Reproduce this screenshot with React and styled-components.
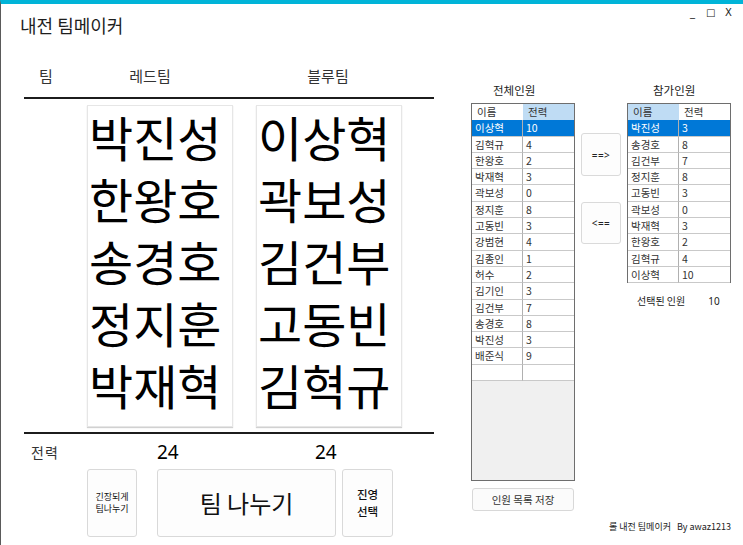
import React from "react";
import styled, { createGlobalStyle } from "styled-components";

const Global = createGlobalStyle`
  html, body { margin: 0; padding: 0; background: #ffffff; }
  body { font-family: "Noto Sans CJK KR", "Noto Sans", sans-serif; }
  * { box-sizing: border-box; }
`;

const Window = styled.div`
  width: 743px;
  height: 545px;
  background: #ffffff;
  border-top: 4px solid #00b4d8;
  border-left: 1px solid #5a5a5a;
  display: flex;
  flex-direction: column;
  overflow: hidden;
  color: #222;
`;

const TitleRow = styled.div`
  height: 46px;
  display: flex;
  justify-content: space-between;
  align-items: flex-start;
`;

const Title = styled.div`
  font-size: 18px;
  line-height: 22px;
  margin: 10px 0 0 19px;
  color: #1e1e1e;
`;

const Controls = styled.div`
  display: flex;
  gap: 9px;
  margin: 2px 10px 0 0;
  font-family: "DejaVu Sans", sans-serif;
  font-size: 10px;
  line-height: 14px;
  color: #222;
`;

const Ctl = styled.span`
  width: 9px;
  text-align: center;
`;

const Content = styled.div`
  display: flex;
  flex: 1;
`;

const LeftPanel = styled.div`
  margin-left: 23px;
  width: 410px;
  display: flex;
  flex-direction: column;
`;

const Header = styled.div`
  height: 49px;
  display: grid;
  grid-template-columns: 44px 164px 192px;
  border-bottom: 2px solid #1c1c1c;
  padding-top: 17px;
`;

const HeadLabel = styled.div`
  text-align: center;
  font-size: 15px;
  line-height: 18px;
  color: #333;
`;

const Cards = styled.div`
  display: grid;
  grid-template-columns: 146px 146px;
  column-gap: 23px;
  margin: 6px 0 0 63px;
`;

const Card = styled.div`
  height: 322px;
  background: #fff;
  border: 1px solid #e6e6e6;
  box-shadow: 0 1px 1px rgba(0, 0, 0, 0.18);
  padding: 4px 0 0 1px;
  display: flex;
  flex-direction: column;
`;

const Name = styled.div`
  font-family: "Liberation Sans", "Noto Sans CJK KR", sans-serif;
  font-size: 48px;
  line-height: 62px;
  height: 62px;
  color: #000;
  white-space: nowrap;
`;

const Rule = styled.div`
  height: 2px;
  background: #1c1c1c;
  margin-top: 5px;
`;

const Stats = styled.div`
  height: 35px;
  display: grid;
  grid-template-columns: 133px 158px auto;
  align-items: center;
`;

const StatLabel = styled.div`
  padding-left: 7px;
  font-size: 14px;
  letter-spacing: 1px;
  color: #333;
`;

const StatValue = styled.div`
  font-size: 19px;
  line-height: 22px;
  color: #000;
  font-family: "Noto Sans", sans-serif;
`;

const ButtonRow = styled.div`
  display: flex;
  margin-left: 63px;
  height: 68px;
`;

const Btn = styled.div`
  width: ${(p) => p.$w}px;
  margin-left: ${(p) => p.$ml || 0}px;
  height: 100%;
  background: #fdfdfd;
  border: 1px solid #d9d9d9;
  border-radius: 3px;
  display: flex;
  align-items: center;
  justify-content: center;
  text-align: center;
  font-size: ${(p) => p.$fs}px;
  line-height: ${(p) => p.$lh || 1.2};
  font-weight: ${(p) => (p.$bold ? 500 : 400)};
  color: #111;
`;

const RightPanel = styled.div`
  margin-left: 37px;
  display: flex;
  flex-direction: column;
`;

const RightTop = styled.div`
  display: flex;
`;

const Col = styled.div`
  display: flex;
  flex-direction: column;
`;

const ListLabel = styled.div`
  margin-top: 33px;
  height: 14px;
  font-size: 11.5px;
  line-height: 14px;
  padding-left: ${(p) => p.$pl}px;
  color: #222;
`;

const Grid = styled.div`
  margin-top: 6px;
  width: 104px;
  height: ${(p) => p.$h}px;
  border: 1px solid #6e6e6e;
  background: #f0f0f0;
  display: flex;
  flex-direction: column;
`;

const Row = styled.div`
  display: grid;
  grid-template-columns: 51px 51px;
  height: 16.3px;
  flex: none;
`;

const Cell = styled.div`
  font-size: 10.5px;
  line-height: 15.3px;
  padding-left: ${(p) => (p.$head ? 5 : 3)}px;
  white-space: nowrap;
  overflow: hidden;
  background: ${(p) => (p.$sel ? "#0078d7" : p.$hl ? "#bfdcf4" : "#fff")};
  color: ${(p) => (p.$sel ? "#fff" : "#333")};
  border-bottom: ${(p) => (p.$head ? "none" : "1px solid #c9c9c9")};
  border-right: ${(p) => (p.$first ? "1px solid #b0b0b0" : "none")};
`;

const MidCol = styled.div`
  width: 40px;
  margin: 0 6px;
  display: flex;
  flex-direction: column;
  padding-top: 83px;
`;

const ArrowBtn = styled.div`
  height: ${(p) => p.$h}px;
  margin-bottom: ${(p) => p.$mb || 0}px;
  background: #fdfdfd;
  border: 1px solid #dadada;
  border-radius: 3px;
  display: flex;
  align-items: center;
  justify-content: center;
  font-family: "Noto Sans", sans-serif;
  font-size: 10px;
  color: #222;
  letter-spacing: 0.5px;
`;

const SaveBtn = styled.div`
  margin-top: 7px;
  margin-left: 1px;
  width: 102px;
  height: 23px;
  background: #fbfbfb;
  border: 1px solid #d8d8d8;
  border-radius: 3px;
  display: flex;
  align-items: center;
  justify-content: center;
  font-size: 10.5px;
  color: #333;
`;

const SelectedInfo = styled.div`
  display: flex;
  margin: 11px 0 0 10px;
  font-size: 10px;
  line-height: 14px;
  color: #222;
`;

const InfoValue = styled.span`
  margin-left: 23px;
  font-family: "Noto Sans", sans-serif;
`;

const Footer = styled.div`
  margin-top: 9px;
  text-align: right;
  padding-right: 0;
  font-size: 9px;
  line-height: 14px;
  color: #222;
  white-space: pre;
`;

const red = ["박진성", "한왕호", "송경호", "정지훈", "박재혁"];
const blue = ["이상혁", "곽보성", "김건부", "고동빈", "김혁규"];

const all = [
  ["이상혁", "10"], ["김혁규", "4"], ["한왕호", "2"], ["박재혁", "3"], ["곽보성", "0"],
  ["정지훈", "8"], ["고동빈", "3"], ["강범현", "4"], ["김종인", "1"], ["허수", "2"],
  ["김기인", "3"], ["김건부", "7"], ["송경호", "8"], ["박진성", "3"], ["배준식", "9"],
  ["", ""],
];

const joined = [
  ["박진성", "3"], ["송경호", "8"], ["김건부", "7"], ["정지훈", "8"], ["고동빈", "3"],
  ["곽보성", "0"], ["박재혁", "3"], ["한왕호", "2"], ["김혁규", "4"], ["이상혁", "10"],
];

function DataGrid({ rows, hlCol, height }) {
  return (
    <Grid $h={height}>
      <Row>
        <Cell $head $hl={hlCol === 0}>이름</Cell>
        <Cell $head $hl={hlCol === 1}>전력</Cell>
      </Row>
      {rows.map((r, i) => (
        <Row key={i}>
          <Cell $first $sel={i === 0}>{r[0]}</Cell>
          <Cell $sel={i === 0}>{r[1]}</Cell>
        </Row>
      ))}
    </Grid>
  );
}

export default function App() {
  return (
    <>
      <Global />
      <Window>
        <TitleRow>
          <Title>내전 팀메이커</Title>
          <Controls>
            <Ctl>_</Ctl>
            <Ctl>□</Ctl>
            <Ctl>X</Ctl>
          </Controls>
        </TitleRow>
        <Content>
          <LeftPanel>
            <Header>
              <HeadLabel>팀</HeadLabel>
              <HeadLabel>레드팀</HeadLabel>
              <HeadLabel>블루팀</HeadLabel>
            </Header>
            <Cards>
              <Card>{red.map((n) => <Name key={n}>{n}</Name>)}</Card>
              <Card>{blue.map((n) => <Name key={n}>{n}</Name>)}</Card>
            </Cards>
            <Rule />
            <Stats>
              <StatLabel>전력</StatLabel>
              <StatValue>24</StatValue>
              <StatValue>24</StatValue>
            </Stats>
            <ButtonRow>
              <Btn $w={50} $fs={9} $lh={1.3}>긴장되게<br />팀나누기</Btn>
              <Btn $w={179} $ml={20} $fs={24}>팀 나누기</Btn>
              <Btn $w={51} $ml={6} $fs={11.5} $lh={1.45} $bold>진영<br />선택</Btn>
            </ButtonRow>
          </LeftPanel>
          <RightPanel>
            <RightTop>
              <Col>
                <ListLabel $pl={22}>전체인원</ListLabel>
                <DataGrid rows={all} hlCol={1} height={378} />
                <SaveBtn>인원 목록 저장</SaveBtn>
              </Col>
              <MidCol>
                <ArrowBtn $h={43} $mb={26}>==&gt;</ArrowBtn>
                <ArrowBtn $h={42}>&lt;==</ArrowBtn>
              </MidCol>
              <Col>
                <ListLabel $pl={26}>참가인원</ListLabel>
                <DataGrid rows={joined} hlCol={0} height={180} />
                <SelectedInfo>
                  선택된 인원<InfoValue>10</InfoValue>
                </SelectedInfo>
              </Col>
            </RightTop>
            <Footer>{"롤 내전 팀메이커   By awaz1213"}</Footer>
          </RightPanel>
        </Content>
      </Window>
    </>
  );
}
